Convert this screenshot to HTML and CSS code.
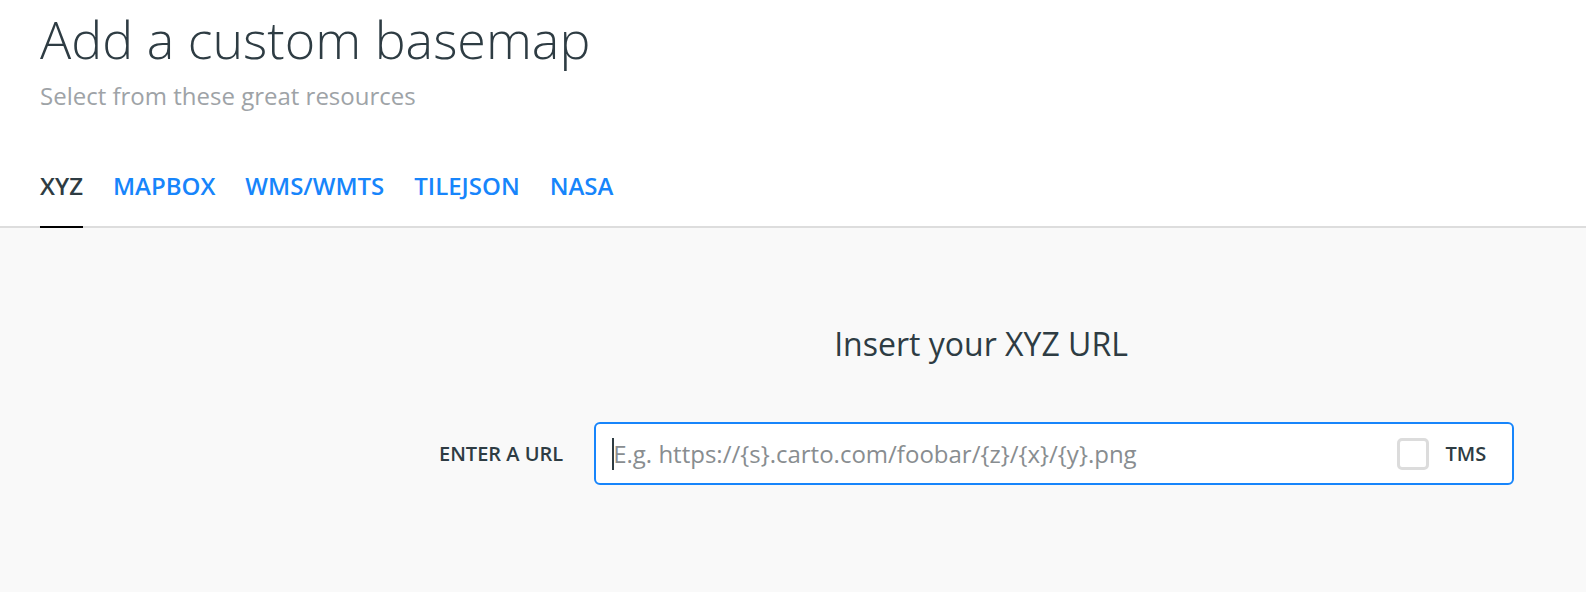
FILE: index.html
```html
<!DOCTYPE html>
<html lang="en">
<head>
<meta charset="utf-8">
<title>Add a custom basemap</title>
<link rel="stylesheet" href="styles.css">
</head>
<body>
<header class="header">
  <h1 class="title">Add a custom basemap</h1>
  <p class="subtitle">Select from these great resources</p>
  <nav class="tabs">
    <span class="tab tab-active">XYZ</span>
    <span class="tab">MAPBOX</span>
    <span class="tab">WMS/WMTS</span>
    <span class="tab">TILEJSON</span>
    <span class="tab">NASA</span>
  </nav>
</header>
<main class="content">
  <div class="form-block">
    <h2 class="form-title">Insert your XYZ URL</h2>
    <div class="form-row">
      <label class="field-label">ENTER A URL</label>
      <div class="input-box">
        <span class="caret"></span>
        <span class="placeholder">E.g. https://{s}.carto.com/foobar/{z}/{x}/{y}.png</span>
        <span class="checkbox"></span>
        <span class="check-label">TMS</span>
      </div>
    </div>
  </div>
</main>
</body>
</html>
```
FILE: styles.css
```css
* { box-sizing: border-box; }
html, body {
  margin: 0;
  padding: 0;
  height: 100%;
}
body {
  font-family: "Open Sans", "Noto Sans", sans-serif;
  color: #2e3c43;
  background: #f9f9f9;
  overflow: hidden;
}
.header {
  background: #fff;
  padding: 7px 0 0 40px;
  border-bottom: 2px solid #ddd;
}
.title {
  margin: 0;
  font-size: 52px;
  line-height: 64px;
  font-weight: 300;
  color: #2e3c43;
}
.subtitle {
  margin: 10px 0 0 0;
  font-size: 24px;
  line-height: 30px;
  font-weight: 400;
  color: #9ea3a7;
}
.tabs {
  display: flex;
  gap: 30px;
  margin-top: 58px;
}
.tab {
  font-size: 24px;
  line-height: 33px;
  font-weight: 600;
  color: #1785fb;
  padding-bottom: 24px;
  margin-bottom: -2px;
  border-bottom: 2px solid transparent;
}
.tab-active {
  color: #2e3c43;
  border-bottom-color: #000;
}
.content {
  padding-top: 94px;
}
.form-block {
  margin-left: 439px;
  width: 1084px;
}
.form-title {
  margin: 0;
  text-align: center;
  font-size: 32px;
  line-height: 44px;
  font-weight: 400;
  color: #2e3c43;
}
.form-row {
  display: flex;
  align-items: center;
  gap: 31px;
  margin-top: 56px;
}
.field-label {
  font-size: 20px;
  line-height: 28px;
  font-weight: 600;
  color: #2e3c43;
  white-space: nowrap;
}
.input-box {
  position: relative;
  width: 920px;
  height: 63px;
  background: #fff;
  border: 2px solid #1785fb;
  border-radius: 6px;
  display: flex;
  align-items: center;
  padding: 0 26px 0 17px;
}
.caret {
  position: absolute;
  left: 16px;
  top: 14px;
  width: 2px;
  height: 32px;
  background: #2e3c43;
}
.placeholder {
  flex: 1;
  font-size: 24px;
  line-height: 32px;
  color: #888d90;
  white-space: nowrap;
}
.checkbox {
  width: 32px;
  height: 32px;
  border: 3px solid #dcdcdc;
  border-radius: 5px;
  background: #fff;
  margin-right: 16px;
}
.check-label {
  font-size: 20px;
  line-height: 28px;
  font-weight: 600;
  color: #2e3c43;
}
```
